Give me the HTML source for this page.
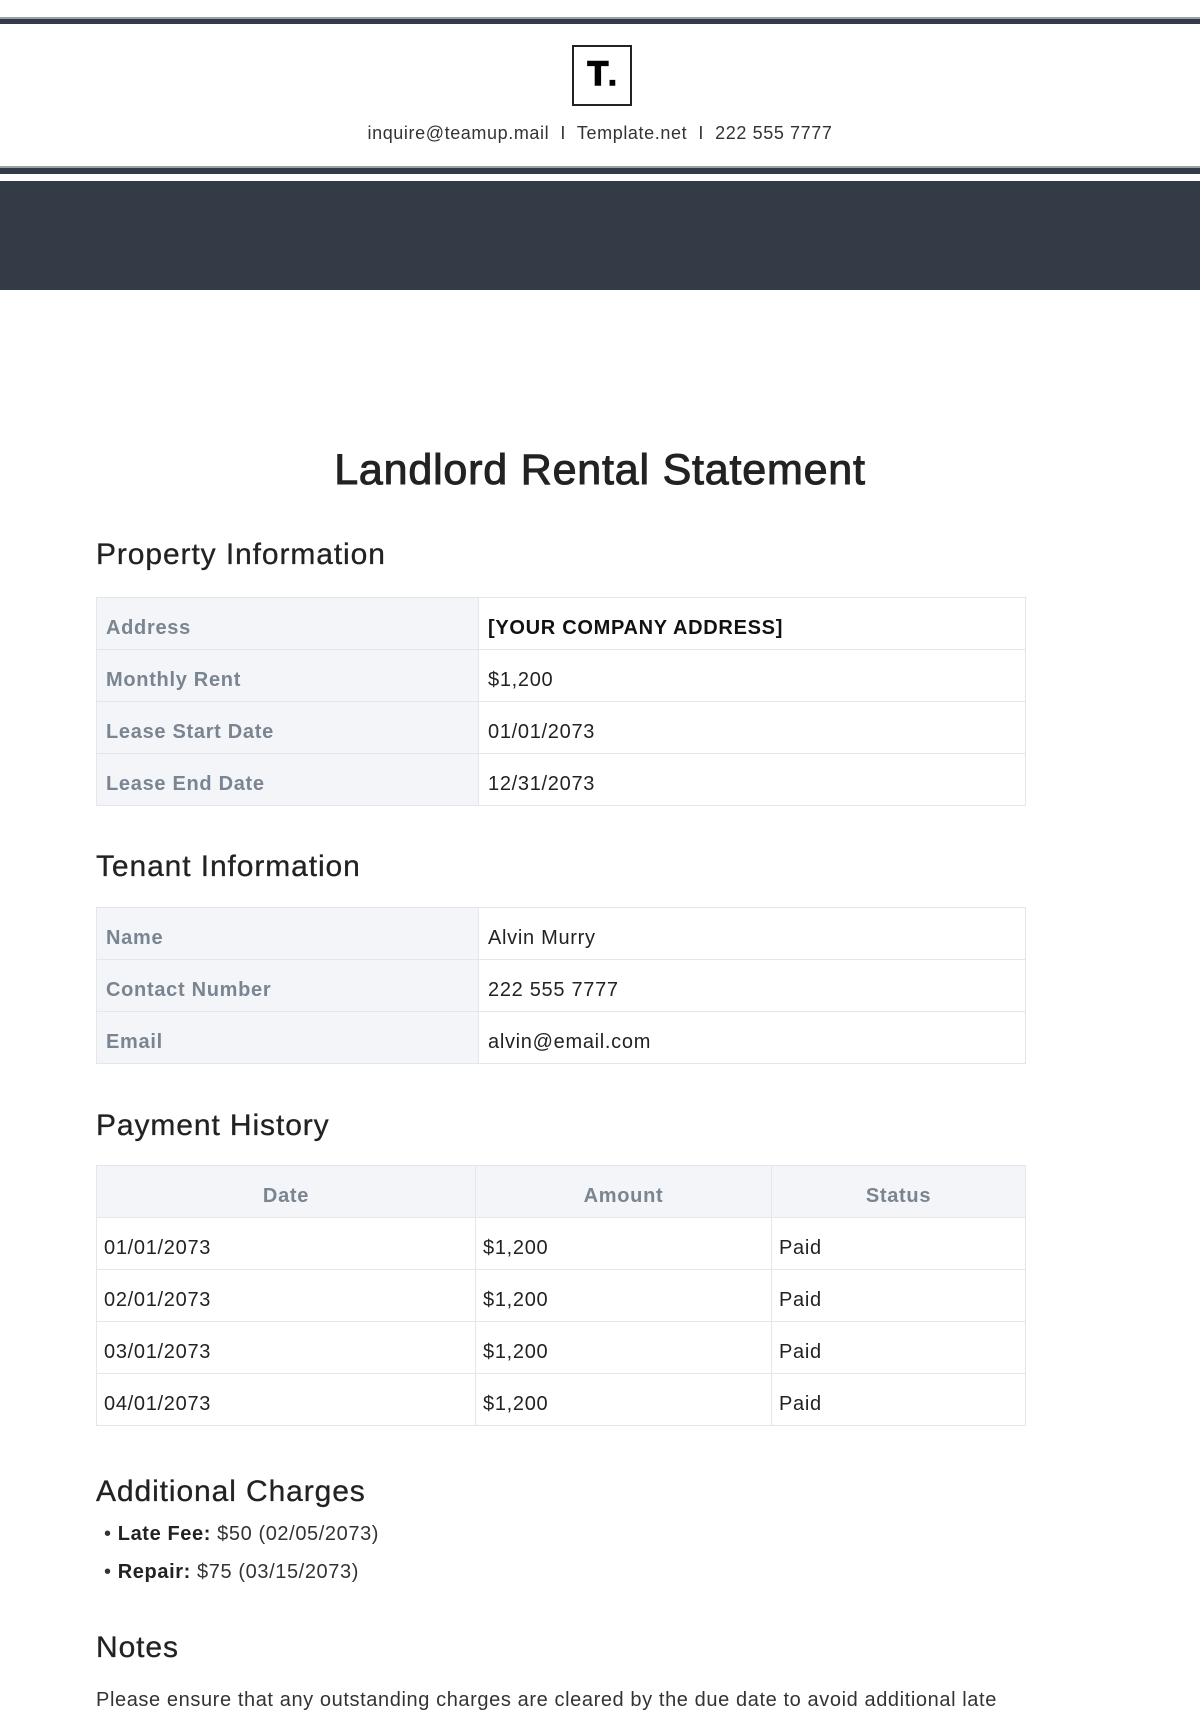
<!DOCTYPE html>
<html><head><meta charset="utf-8"><style>
*{margin:0;padding:0;box-sizing:border-box}
body{width:1200px;height:1700px;overflow:hidden;background:#fff;font-family:"Liberation Sans",sans-serif;color:#222;position:relative}
.abs{position:absolute}
h2{position:absolute;left:96px;font-size:30px;font-weight:normal;color:#222;line-height:1;-webkit-text-stroke:0.3px #222;letter-spacing:0.9px}
table{position:absolute;left:96px;width:930px;border-collapse:collapse;font-size:20px;letter-spacing:0.7px}
td,th{border:1.5px solid #e3e6ea;height:52px;padding:10px 9px 0;text-align:left;font-weight:normal}
td.l{background:#f3f5f8;color:#7a8591;font-weight:bold;width:382px}
th{background:#f3f5f8;color:#7a8591;font-weight:bold;text-align:center}
.pay td{padding:10px 7px 0}
</style></head><body>
<div class="abs" style="left:0;top:17px;width:1200px;height:2px;background:#9aa0a8"></div>
<div class="abs" style="left:0;top:19px;width:1200px;height:5px;background:#333b47"></div>
<div class="abs" style="left:572px;top:45px;width:60px;height:61px;border:2px solid #222"></div>
<div class="abs" style="left:572px;top:55px;width:60px;text-align:center;font-size:34px;font-weight:bold;color:#000;-webkit-text-stroke:1.5px #000">T<span style="font-size:30px">.</span></div>
<div class="abs" style="left:0;top:123px;width:1200px;text-align:center;font-size:18px;letter-spacing:0.6px;color:#333">inquire@teamup.mail &nbsp;I&nbsp; Template.net &nbsp;I&nbsp; 222 555 7777</div>
<div class="abs" style="left:0;top:166px;width:1200px;height:2px;background:#9aa0a8"></div>
<div class="abs" style="left:0;top:168px;width:1200px;height:6px;background:#333b47"></div>
<div class="abs" style="left:0;top:181px;width:1200px;height:109px;background:#333b47"></div>
<div class="abs" style="left:0;top:446px;width:1200px;text-align:center;font-size:43px;letter-spacing:0.8px;color:#222;-webkit-text-stroke:1px #222">Landlord Rental Statement</div>
<h2 style="top:540px">Property Information</h2>
<table style="top:597px"><tr><td class="l">Address</td><td style="font-weight:bold;color:#111">[YOUR COMPANY ADDRESS]</td></tr>
<tr><td class="l">Monthly Rent</td><td>$1,200</td></tr>
<tr><td class="l">Lease Start Date</td><td>01/01/2073</td></tr>
<tr><td class="l">Lease End Date</td><td>12/31/2073</td></tr></table>
<h2 style="top:852px">Tenant Information</h2>
<table style="top:907px"><tr><td class="l">Name</td><td>Alvin Murry</td></tr>
<tr><td class="l">Contact Number</td><td>222 555 7777</td></tr>
<tr><td class="l">Email</td><td>alvin@email.com</td></tr></table>
<h2 style="top:1111px">Payment History</h2>
<table class="pay" style="top:1165px"><tr><th style="width:379px;padding-top:10px">Date</th><th style="width:296px;padding-top:10px">Amount</th><th style="padding-top:10px">Status</th></tr>
<tr><td>01/01/2073</td><td>$1,200</td><td>Paid</td></tr>
<tr><td>02/01/2073</td><td>$1,200</td><td>Paid</td></tr>
<tr><td>03/01/2073</td><td>$1,200</td><td>Paid</td></tr>
<tr><td>04/01/2073</td><td>$1,200</td><td>Paid</td></tr></table>
<h2 style="top:1477px">Additional Charges</h2>
<div class="abs" style="left:104px;top:1523px;font-size:20px;letter-spacing:0.6px;color:#333">• <b style="color:#222">Late Fee:</b> $50 (02/05/2073)</div>
<div class="abs" style="left:104px;top:1561px;font-size:20px;letter-spacing:0.6px;color:#333">• <b style="color:#222">Repair:</b> $75 (03/15/2073)</div>
<div class="abs" style="left:96px;top:1633px;font-size:30px;letter-spacing:0.9px;color:#222;-webkit-text-stroke:0.3px #222;line-height:1">Notes</div>
<div class="abs" style="left:96px;top:1689px;font-size:20px;letter-spacing:0.6px;color:#333;white-space:nowrap">Please ensure that any outstanding charges are cleared by the due date to avoid additional late</div>
</body></html>
